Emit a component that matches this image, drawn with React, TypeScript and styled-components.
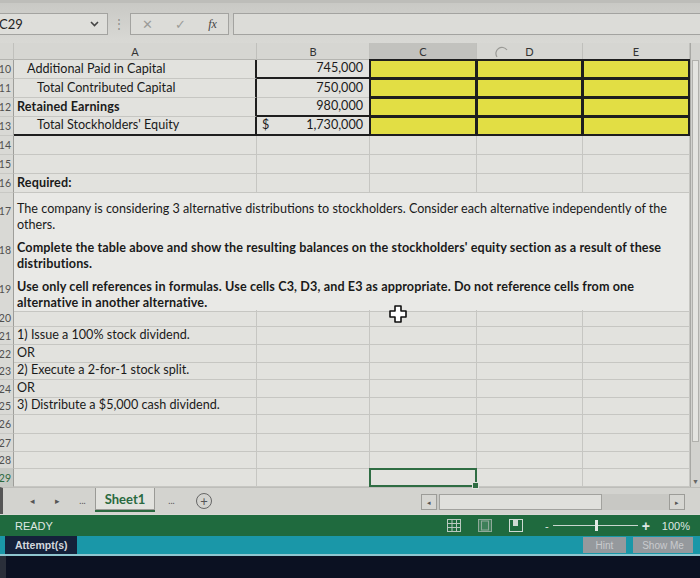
import React from "react";
import styled, { createGlobalStyle, css } from "styled-components";

const GlobalStyle = createGlobalStyle`
  html, body {
    margin: 0;
    padding: 0;
    width: 700px;
    height: 578px;
    overflow: hidden;
    background: #d6d6d2;
    font-family: Lato, "Open Sans", sans-serif;
  }
`;

const COLS = "22px 243px 113px 107px 106px 107px";

const Page = styled.div`
  width: 700px;
  height: 578px;
  display: flex;
  flex-direction: column;
  overflow: hidden;
  background: #d8d8d4;
`;

/* ---------- formula bar ---------- */
const FormulaBar = styled.div`
  height: 43px;
  display: flex;
  align-items: center;
  gap: 4px;
  padding-top: 2px;
  box-sizing: border-box;
  background: linear-gradient(#c9c9c5, #d9d9d5);
  border-top: 3px solid #bdbdb9;
`;

const NameBox = styled.div`
  width: 110px;
  height: 22px;
  margin-left: -2px;
  display: flex;
  align-items: center;
  justify-content: space-between;
  padding: 0 8px 0 0;
  box-sizing: border-box;
  border: 1px solid #a3a3a0;
  background: #dededa;
  font-size: 13px;
  color: #222;
`;

const Dots = styled.div`
  width: 14px;
  text-align: center;
  color: #8d8d8a;
  font-size: 12px;
  line-height: 6px;
`;

const EditButtons = styled.div`
  width: 99px;
  height: 22px;
  display: flex;
  align-items: center;
  justify-content: space-around;
  box-sizing: border-box;
  border: 1px solid #a3a3a0;
  background: #dcdcd8;
  color: #9c9c99;
  font-size: 13px;
`;

const Fx = styled.span`
  font-family: "Liberation Serif", serif;
  font-style: italic;
  color: #444;
  font-size: 12px;
`;

const FormulaInput = styled.div`
  flex: 1;
  height: 22px;
  box-sizing: border-box;
  border: 1px solid #a3a3a0;
  border-right: none;
  background: #dcdcd8;
`;

/* ---------- sheet ---------- */
const SheetArea = styled.div`
  display: flex;
  height: 444px;
  position: relative;
`;

const Sheet = styled.div`
  width: 698px;
  margin-left: -8px;
  flex-shrink: 0;
  background: #e2e2de;
`;

const Row = styled.div<{ $h: number }>`
  display: grid;
  grid-template-columns: ${COLS};
  height: ${(p) => p.$h}px;
`;

const HeadCell = styled.div<{ $sel?: boolean }>`
  display: flex;
  align-items: center;
  justify-content: center;
  font-size: 11px;
  color: #333;
  background: ${(p) => (p.$sel ? "#c2c2be" : "#d6d6d2")};
  border-right: 1px solid #c0c0bc;
  border-bottom: 1px solid #b4b4b0;
`;

const RowHead = styled.div<{ $top?: boolean; $active?: boolean }>`
  display: flex;
  justify-content: flex-end;
  align-items: ${(p) => (p.$top ? "flex-start" : "center")};
  padding: ${(p) => (p.$top ? "12px 2px 0 0" : "0 2px 0 0")};
  font-size: 10.5px;
  color: ${(p) => (p.$active ? "#2b6a3e" : "#505050")};
  background: ${(p) => (p.$active ? "#c6c9c4" : "#d9d9d5")};
  border-right: 1px solid #9e9e9a;
  border-bottom: 1px solid #c8c8c4;
`;

type Edge = { t?: boolean; r?: boolean; b?: boolean; l?: boolean };

const thick = "2px solid #1e1e1e";

const Cell = styled.div<{
  $bold?: boolean;
  $indent?: number;
  $right?: boolean;
  $yellow?: boolean;
  $span?: string;
  $edge?: Edge;
  $wrap?: boolean;
  $light?: boolean;
}>`
  display: flex;
  align-items: flex-end;
  justify-content: ${(p) => (p.$right ? "space-between" : "flex-start")};
  padding: 0 6px 1px ${(p) => 3 + (p.$indent || 0)}px;
  box-sizing: border-box;
  font-size: 12.6px;
  line-height: 16px;
  color: #1a1a1a;
  font-weight: ${(p) => (p.$bold ? 700 : 400)};
  letter-spacing: ${(p) => (p.$bold ? "0.12px" : "0")};
  white-space: nowrap;
  background: ${(p) => (p.$yellow ? "#e2de44" : p.$light ? "#e9e9e6" : "transparent")};
  border-right: 1px solid #c6c6c2;
  border-bottom: 1px solid #c6c6c2;
  ${(p) => p.$span && css`grid-column: ${p.$span};`}
  ${(p) =>
    p.$yellow &&
    css`
      border: ${thick};
      margin: -1px 0 0 -1px;
    `}
  ${(p) => p.$edge?.t && css`border-top: ${thick};`}
  ${(p) => p.$edge?.r && css`border-right: ${thick};`}
  ${(p) => p.$edge?.b && css`border-bottom: ${thick};`}
  ${(p) => p.$edge?.l && css`border-left: ${thick};`}
  ${(p) =>
    p.$wrap &&
    css`
      flex-direction: column;
      align-items: flex-start;
      justify-content: flex-start;
      padding-top: 8px;
      padding-bottom: 0;
    `}
`;

const Dollar = styled.span`
  padding-left: 2px;
`;

const ActiveCell = styled.div`
  position: relative;
  border: 2px solid #2f6d43;
  margin: -1px 0 0 -1px;
`;

const FillHandle = styled.span`
  position: absolute;
  right: -4px;
  bottom: -4px;
  width: 5px;
  height: 5px;
  background: #2f6d43;
  border: 1px solid #e2e2de;
`;

const VScroll = styled.div`
  width: 10px;
  display: flex;
  flex-direction: column;
  justify-content: space-between;
  background: #d2d2ce;
  border-left: 1px solid #a8a8a4;
`;

const ScrollThumb = styled.div`
  margin: 17px 1px 0 1px;
  height: 380px;
  background: #e4e4e0;
  border: 1px solid #b0b0ac;
`;

const ScrollArrow = styled.div`
  font-size: 7px;
  color: #666;
  text-align: center;
  padding-bottom: 2px;
`;

const Cursor = styled.svg`
  position: absolute;
  left: 389px;
  top: 262px;
`;

const Ring = styled.svg`
  position: absolute;
  left: 495px;
  top: 3px;
`;

/* ---------- tabs ---------- */
const TabBar = styled.div`
  height: 26px;
  display: flex;
  align-items: flex-start;
  background: #d3d3cf;
  border-top: 1px solid #bdbdb9;
  border-left: 3px solid #555;
`;

const TabNav = styled.div<{ $ml?: number }>`
  width: 25px;
  margin-left: ${(p) => p.$ml || 0}px;
  padding-top: 7px;
  text-align: center;
  font-size: 9px;
  color: #555;
`;

const SheetTab = styled.div`
  width: 60px;
  height: 22px;
  display: flex;
  align-items: center;
  justify-content: center;
  box-sizing: border-box;
  border: 1px solid #9a9a96;
  border-top: none;
  background: #e2e2de;
  color: #2a6a40;
  font-weight: 700;
  font-size: 13px;
  box-shadow: 0 2px 0 #2a6a40;
`;

const AddSheet = styled.div`
  margin: 5px 0 0 12px;
  width: 14px;
  height: 14px;
  border-radius: 50%;
  border: 1.5px solid #666;
  display: flex;
  align-items: center;
  justify-content: center;
  font-size: 13px;
  line-height: 1;
  color: #555;
`;

const HScroll = styled.div`
  margin: 6px 0 0 209px;
  width: 264px;
  height: 16px;
  display: flex;
  background: #c8c8c4;
`;

const HBtn = styled.div`
  width: 16px;
  height: 16px;
  box-sizing: border-box;
  border: 1px solid #9c9c98;
  background: #d6d6d2;
  font-size: 7px;
  color: #555;
  display: flex;
  align-items: center;
  justify-content: center;
`;

const HThumb = styled.div`
  width: 163px;
  margin-left: 2px;
  box-sizing: border-box;
  border: 1px solid #a2a29e;
  background: #e0e0dc;
`;

const HTrack = styled.div`
  flex: 1;
`;

/* ---------- status ---------- */
const StatusBar = styled.div`
  height: 21px;
  margin-top: 1px;
  display: flex;
  align-items: center;
  padding: 0 10px 0 15px;
  background: #1f6a3e;
  color: #dfe7e2;
  font-size: 11px;
  font-family: "Liberation Sans", Arial, sans-serif;
`;

const Ready = styled.span`
  flex: 1;
`;

const ViewIcons = styled.div`
  display: flex;
  gap: 17px;
  margin-right: 22px;
`;

const Zoom = styled.div`
  display: flex;
  align-items: center;
  gap: 4px;
  font-size: 11px;
`;

const ZoomLine = styled.div`
  position: relative;
  width: 85px;
  height: 1px;
  background: #c9d6ce;
`;

const ZoomKnob = styled.span`
  position: absolute;
  left: 42px;
  top: -5px;
  width: 3px;
  height: 11px;
  background: #e3e9e5;
`;

const Plus = styled.span`
  font-size: 14px;
  font-weight: 700;
`;

const Percent = styled.span`
  margin-left: 8px;
`;

const AttemptBar = styled.div`
  height: 18px;
  display: flex;
  align-items: stretch;
  background: #1a97a8;
  border-bottom: 2px solid #8fc6cf;
  font-family: "Liberation Sans", Arial, sans-serif;
  font-size: 10.5px;
  font-weight: 700;
`;

const AttemptLabel = styled.div`
  width: 72px;
  margin-left: 5px;
  display: flex;
  align-items: center;
  padding-left: 10px;
  box-sizing: border-box;
  background: #14213a;
  color: #d4d8de;
`;

const Spacer = styled.div`
  flex: 1;
`;

const GreyButton = styled.div<{ $w: number }>`
  width: ${(p) => p.$w}px;
  margin: 1px 7px 1px 0;
  display: flex;
  align-items: center;
  justify-content: center;
  background: #95999d;
  color: #c9cbcd;
  font-weight: 400;
  font-size: 10px;
`;

const Footer = styled.div`
  flex: 1;
  background: #0b1122;
  border-left: 6px solid #2a2f3a;
`;

const rowsTop: [string, string, string, number, boolean, Edge, Edge][] = [
  ["10", "Additional Paid in Capital", "745,000", 10, false, { r: true }, { b: true }],
  ["11", "Total Contributed Capital", "750,000", 20, false, { r: true }, {}],
  ["12", "Retained Earnings", "980,000", 0, true, { r: true }, { b: true }],
  ["13", "Total Stockholders' Equity", "1,730,000", 20, false, { r: true, b: true }, { b: true }],
];

const wrapRows: [string, string, string, boolean][] = [
  [
    "17",
    "The company is considering 3 alternative distributions to stockholders.  Consider each alternative independently of the",
    "others.",
    false,
  ],
  [
    "18",
    "Complete the table above and show the resulting balances on the stockholders' equity section as a result of these",
    "distributions.",
    true,
  ],
  [
    "19",
    "Use only cell references in formulas.  Use cells C3, D3, and E3 as appropriate.  Do not reference cells from one",
    "alternative in another alternative.",
    true,
  ],
];

const lowerRows: [string, string, number][] = [
  ["20", "", 17],
  ["21", "1) Issue a 100% stock dividend.", 18],
  ["22", "OR", 17],
  ["23", "2) Execute a 2-for-1 stock split.", 18],
  ["24", "OR", 17],
  ["25", "3) Distribute a $5,000 cash dividend.", 18],
  ["26", "", 19],
  ["27", "", 18],
  ["28", "", 17],
];

const Blank = () => (
  <>
    <Cell />
    <Cell />
    <Cell />
    <Cell />
    <Cell />
  </>
);

export default function App() {
  return (
    <Page>
      <GlobalStyle />
      <FormulaBar>
        <NameBox>
          <span>C29</span>
          <svg width="9" height="6" viewBox="0 0 9 6">
            <path d="M1 1l3.5 3.5L8 1" stroke="#444" strokeWidth="1.6" fill="none" />
          </svg>
        </NameBox>
        <Dots>⋮</Dots>
        <EditButtons>
          <span>✕</span>
          <span>✓</span>
          <Fx>fx</Fx>
        </EditButtons>
        <FormulaInput />
      </FormulaBar>

      <SheetArea>
        <Sheet>
          <Row $h={17}>
            <HeadCell />
            <HeadCell>A</HeadCell>
            <HeadCell>B</HeadCell>
            <HeadCell $sel>C</HeadCell>
            <HeadCell>D</HeadCell>
            <HeadCell>E</HeadCell>
          </Row>
          {rowsTop.map(([n, label, val, ind, bold, ea, eb]) => (
            <Row $h={19} key={n}>
              <RowHead>{n}</RowHead>
              <Cell $indent={ind} $bold={bold} $edge={ea}>
                {label}
              </Cell>
              <Cell $right $edge={eb}>
                <Dollar>{n === "13" ? "$" : ""}</Dollar>
                <span>{val}</span>
              </Cell>
              <Cell $yellow />
              <Cell $yellow />
              <Cell $yellow />
            </Row>
          ))}
          <Row $h={19}>
            <RowHead>14</RowHead>
            <Blank />
          </Row>
          <Row $h={19}>
            <RowHead>15</RowHead>
            <Blank />
          </Row>
          <Row $h={19}>
            <RowHead>16</RowHead>
            <Cell $bold>Required:</Cell>
            <Cell />
            <Cell />
            <Cell />
            <Cell />
          </Row>
          {wrapRows.map(([n, l1, l2, bold]) => (
            <Row $h={39} key={n}>
              <RowHead $top>{n}</RowHead>
              <Cell $span="2 / 7" $wrap $bold={bold} $light>
                <span>{l1}</span>
                <span>{l2}</span>
              </Cell>
            </Row>
          ))}
          {lowerRows.map(([n, text, h]) => (
            <Row $h={h} key={n}>
              <RowHead>{n}</RowHead>
              <Cell>{text}</Cell>
              <Cell />
              <Cell />
              <Cell />
              <Cell />
            </Row>
          ))}
          <Row $h={18}>
            <RowHead $active>29</RowHead>
            <Cell />
            <Cell />
            <ActiveCell>
              <FillHandle />
            </ActiveCell>
            <Cell />
            <Cell />
          </Row>
        </Sheet>
        <VScroll>
          <ScrollThumb />
          <ScrollArrow>▼</ScrollArrow>
        </VScroll>
        <Cursor width="18" height="18" viewBox="0 0 18 18">
          <path
            d="M6 1h6v5h5v6h-5v5H6v-5H1V6h5z"
            fill="#fff"
            stroke="#111"
            strokeWidth="1.6"
            strokeLinejoin="round"
          />
        </Cursor>
        <Ring width="14" height="14" viewBox="0 0 14 14">
          <path d="M2 11A6 6 0 0 1 12 4" stroke="#9a9a96" strokeWidth="1.2" fill="none" />
        </Ring>
      </SheetArea>

      <TabBar>
        <TabNav $ml={17}>◂</TabNav>
        <TabNav>▸</TabNav>
        <TabNav>...</TabNav>
        <SheetTab>Sheet1</SheetTab>
        <TabNav $ml={4}>...</TabNav>
        <AddSheet>+</AddSheet>
        <HScroll>
          <HBtn>◂</HBtn>
          <HThumb />
          <HTrack />
          <HBtn>▸</HBtn>
        </HScroll>
      </TabBar>

      <StatusBar>
        <Ready>READY</Ready>
        <ViewIcons>
          <svg width="14" height="13" viewBox="0 0 14 13">
            <rect x="0.5" y="0.5" width="13" height="12" fill="none" stroke="#b9c8bf" />
            <path d="M5 0.5v12M9.5 0.5v12M0.5 4.5h13M0.5 8.5h13" stroke="#b9c8bf" />
          </svg>
          <svg width="14" height="13" viewBox="0 0 14 13">
            <rect x="0.5" y="0.5" width="13" height="12" fill="#3d7f58" stroke="#8fa99a" />
            <rect x="3.5" y="2" width="7" height="9" fill="none" stroke="#8fa99a" />
          </svg>
          <svg width="14" height="13" viewBox="0 0 14 13">
            <rect x="0.5" y="0.5" width="13" height="12" fill="none" stroke="#cfdad3" />
            <rect x="4" y="1" width="5" height="6" fill="#cfdad3" />
          </svg>
        </ViewIcons>
        <Zoom>
          <span>-</span>
          <ZoomLine>
            <ZoomKnob />
          </ZoomLine>
          <Plus>+</Plus>
          <Percent>100%</Percent>
        </Zoom>
      </StatusBar>

      <AttemptBar>
        <AttemptLabel>Attempt(s)</AttemptLabel>
        <Spacer />
        <GreyButton $w={43}>Hint</GreyButton>
        <GreyButton $w={60}>Show Me</GreyButton>
      </AttemptBar>
      <Footer />
    </Page>
  );
}
